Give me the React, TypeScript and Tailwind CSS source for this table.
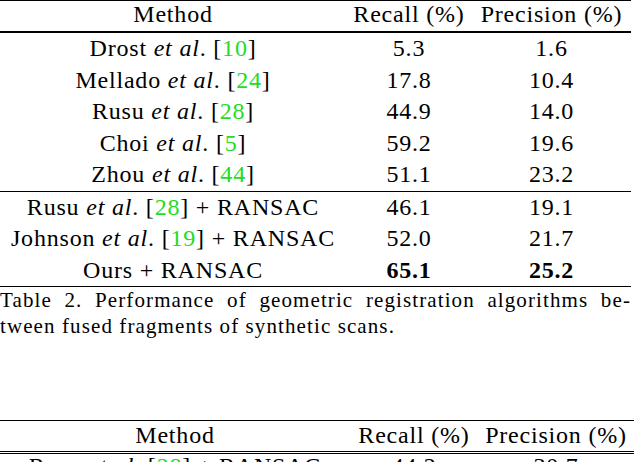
import React from 'react';

type Row = { name: string; ref?: string; suffix?: string; recall: string; precision: string; bold?: boolean };

const groupA: Row[] = [
  { name: 'Drost', ref: '10', recall: '5.3', precision: '1.6' },
  { name: 'Mellado', ref: '24', recall: '17.8', precision: '10.4' },
  { name: 'Rusu', ref: '28', recall: '44.9', precision: '14.0' },
  { name: 'Choi', ref: '5', recall: '59.2', precision: '19.6' },
  { name: 'Zhou', ref: '44', recall: '51.1', precision: '23.2' },
];

const groupB: Row[] = [
  { name: 'Rusu', ref: '28', suffix: ' + RANSAC', recall: '46.1', precision: '19.1' },
  { name: 'Johnson', ref: '19', suffix: ' + RANSAC', recall: '52.0', precision: '21.7' },
  { name: 'Ours', suffix: ' + RANSAC', recall: '65.1', precision: '25.2', bold: true },
];

function MethodCell({ row }: { row: Row }) {
  if (!row.ref) return <span className="font-['Liberation_Serif',serif]">{row.name}{row.suffix}</span>;
  return (
    <span className="font-['Liberation_Serif',serif]">
      {row.name} <em className="italic font-['Liberation_Serif',serif]">et al</em>. [<span className="text-[#22dd22] font-['Liberation_Serif',serif]">{row.ref}</span>]{row.suffix}
    </span>
  );
}

function BodyRow({ row, cols, leading }: { row: Row; cols: string; leading: string }) {
  return (
    <div className={`grid ${cols} ${leading} text-center whitespace-nowrap font-['Liberation_Serif',serif]`}>
      <MethodCell row={row} />
      <span className={row.bold ? "font-bold font-['Liberation_Serif',serif]" : "font-['Liberation_Serif',serif]"}>{row.recall}</span>
      <span className={row.bold ? "font-bold font-['Liberation_Serif',serif]" : "font-['Liberation_Serif',serif]"}>{row.precision}</span>
    </div>
  );
}

function Header({ cols, cls }: { cols: string; cls: string }) {
  return (
    <div className={`grid ${cols} ${cls} text-center font-['Liberation_Serif',serif]`}>
      <span className="font-['Liberation_Serif',serif]">Method</span>
      <span className="font-['Liberation_Serif',serif]">Recall (%)</span>
      <span className="font-['Liberation_Serif',serif]">Precision (%)</span>
    </div>
  );
}

export default function App() {
  const cols1 = 'grid-cols-[346px_126px_159px]';
  const cols2 = 'grid-cols-[350px_128px_156px]';
  return (
    <div className="h-[462px] w-[640px] overflow-hidden bg-white text-black font-['Liberation_Serif',serif]">
      {/* Table 2 */}
      <div className="w-[631px] text-[24px] tracking-[0.8px]">
        <div className="h-px bg-black" />
        <Header cols={cols1} cls="h-[30px] leading-[27px]" />
        <div className="h-[2px] bg-black" />
        {groupA.map((r) => (
          <BodyRow key={r.name} row={r} cols={cols1} leading="leading-[31.5px]" />
        ))}
        <div className="h-px bg-black" />
        {groupB.map((r) => (
          <BodyRow key={r.name} row={r} cols={cols1} leading="leading-[31.5px]" />
        ))}
        <div className="h-px bg-black" />
      </div>

      {/* Caption */}
      <div className="w-[631px] text-[21px] leading-[26px] tracking-[1.1px] font-['Liberation_Serif',serif]">
        <p className="text-justify [text-align-last:justify] font-['Liberation_Serif',serif]">
          Table 2. Performance of geometric registration algorithms be-
        </p>
        <p className="font-['Liberation_Serif',serif]">tween fused fragments of synthetic scans.</p>
      </div>

      {/* Table 3 (cut off) */}
      <div className="mt-[81px] w-[634px] text-[24px] tracking-[0.8px]">
        <div className="h-px bg-black" />
        <Header cols={cols2} cls="h-[30px] leading-[28px]" />
        <div className="h-px bg-black" />
        <div className="h-px" />
        <div className="h-px bg-black" />
        <BodyRow
          row={{ name: 'Rusu', ref: '28', suffix: ' + RANSAC', recall: '44.2', precision: '30.7' }}
          cols={cols2}
          leading="leading-[24px]"
        />
      </div>
    </div>
  );
}
